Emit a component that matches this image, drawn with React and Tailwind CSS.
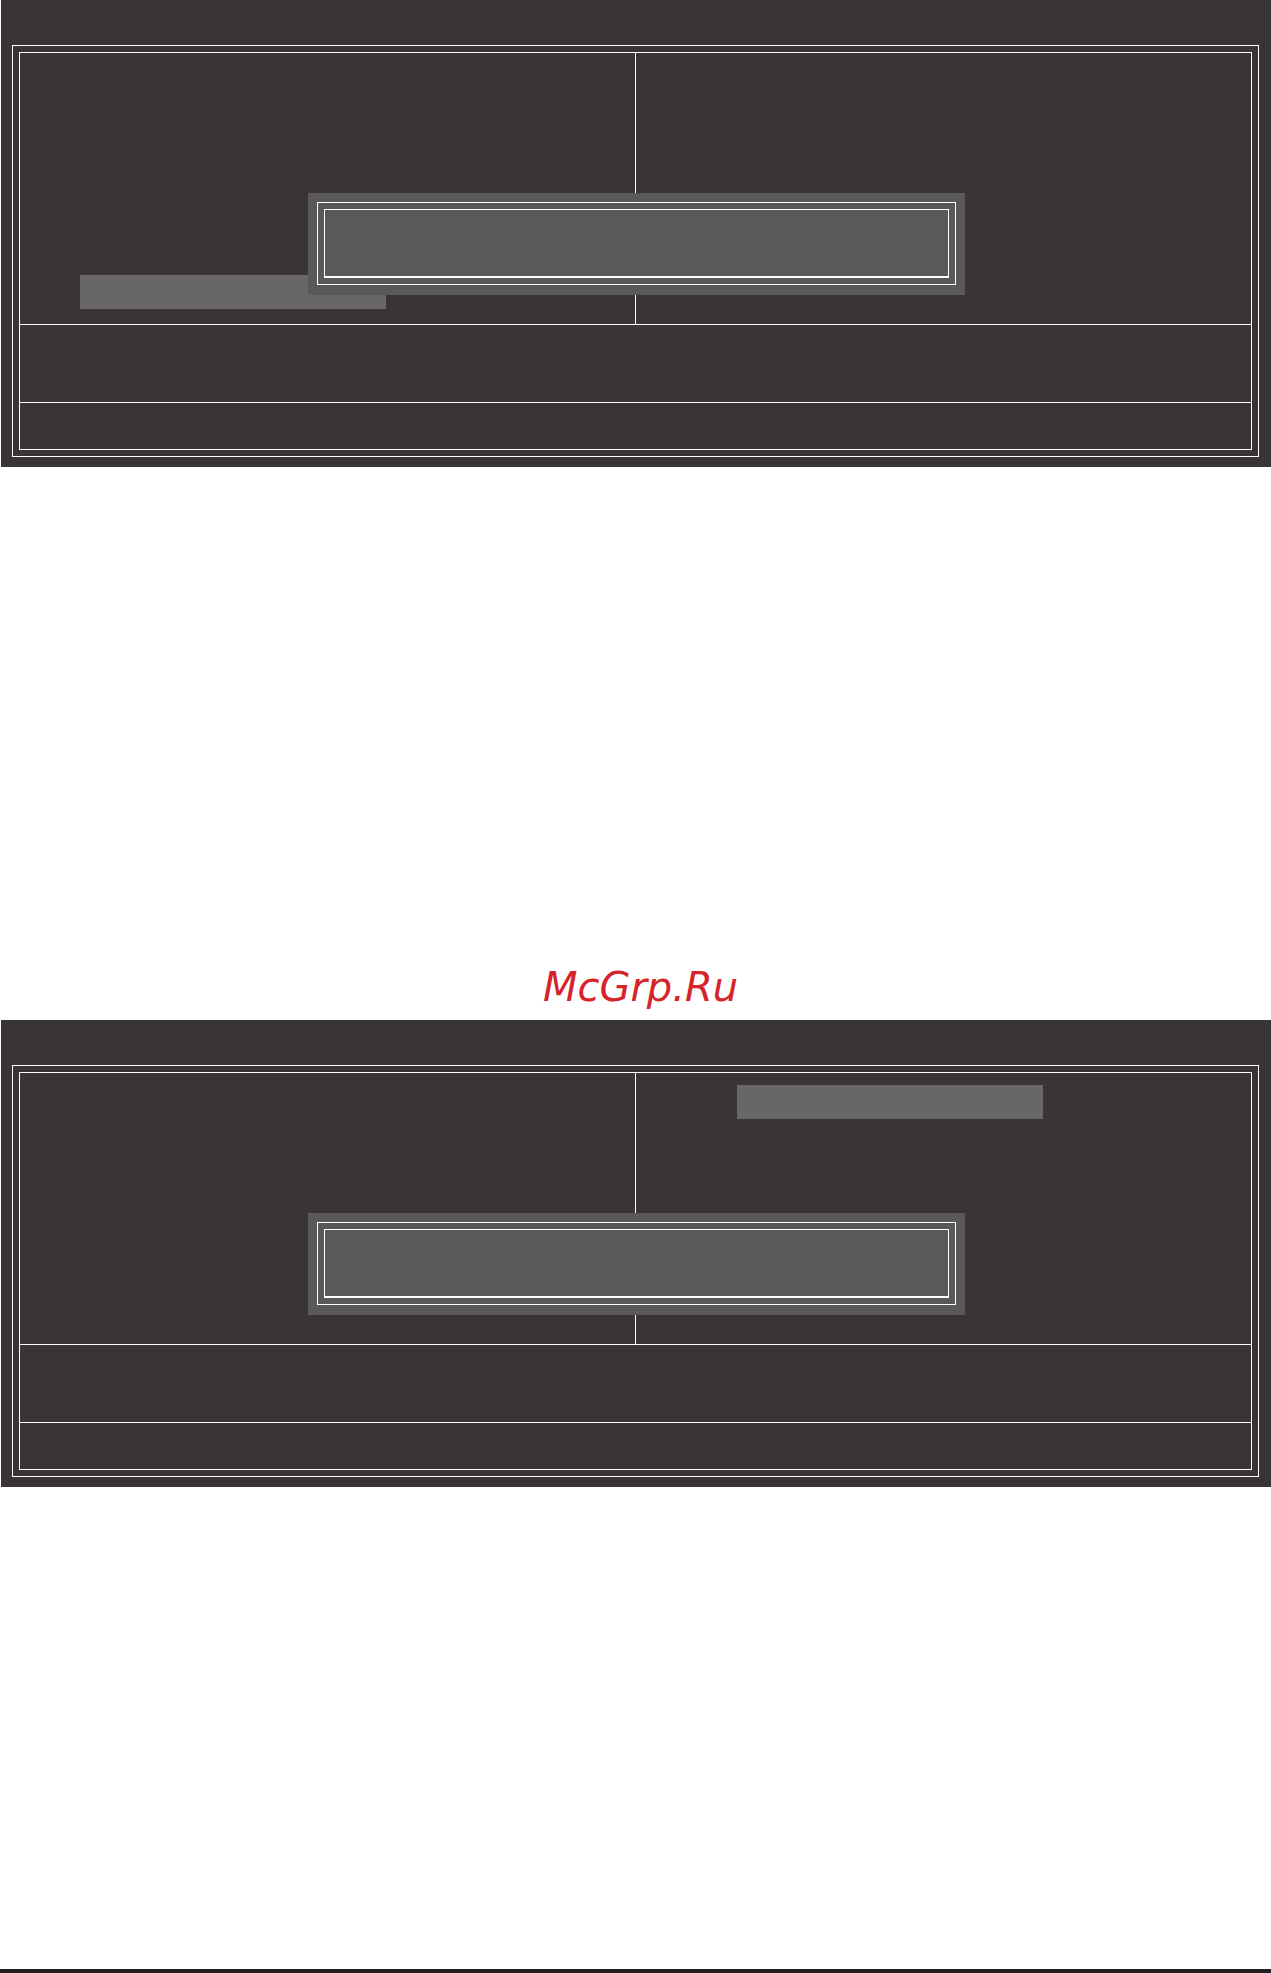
const Popup = () => (
    <div className="absolute left-[307px] top-[193px] w-[657px] h-[102px] bg-[#5a5859] p-[9px] pb-[10px]">
        <div className="h-full border border-white p-[6px]">
            <div className="h-full border border-white border-b-2" />
        </div>
    </div>
);

const Highlight = ({ className }) => (
    <div className={`h-[34px] w-[306px] bg-[#686667] ${className}`} />
);

const BiosPanel = ({ side }) => (
    <div className="relative h-[467px] ml-px bg-[#393536] pt-[45px] pl-[11px] pr-[12px] pb-[10px]">
        <div className="h-full border border-white p-[6px]">
            <div className="h-full border border-white flex flex-col">
                <div className="h-[272px] grid grid-cols-[616px_1fr] border-b border-white">
                    <div className="border-r border-white pt-[222px] pl-[60px]">
                        {side === 'left' && <Highlight />}
                    </div>
                    <div className="pt-[12px] pl-[101px]">
                        {side === 'right' && <Highlight />}
                    </div>
                </div>
                <div className="h-[78px] border-b border-white" />
                <div className="flex-1" />
            </div>
        </div>
        <Popup />
    </div>
);

const App = () => {
    return (
        <div className="w-[1271px] bg-white">
            <BiosPanel side="left" />
            <div className="h-[553px] pt-[500px] flex justify-center pl-[10px]">
                <span className="text-[40px] leading-none italic text-[#d7232a] font-['DejaVu_Sans',sans-serif]">
                    McGrp.Ru
                </span>
            </div>
            <BiosPanel side="right" />
            <div className="h-[482px]" />
            <div className="h-[4px] bg-[#231f20]" />
        </div>
    );
};

export default App;
